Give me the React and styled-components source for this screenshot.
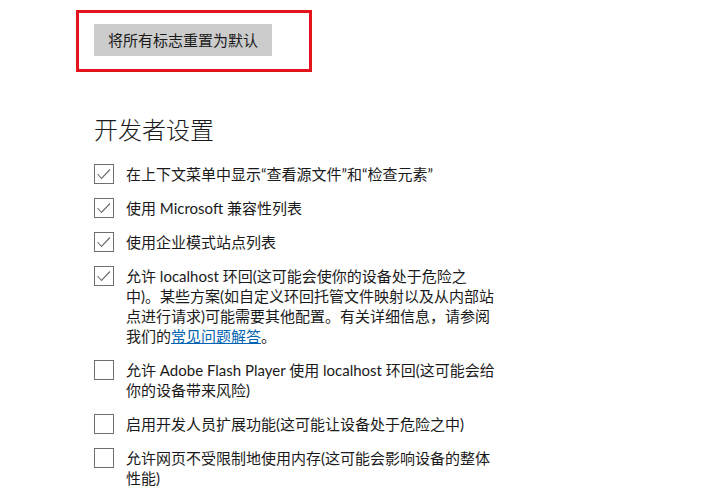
import React from 'react'
import styled, { createGlobalStyle } from 'styled-components'

const GlobalStyle = createGlobalStyle`
  html, body {
    margin: 0;
    padding: 0;
    background: #fff;
  }
  body {
    font-family: "Noto Sans", "Noto Sans CJK SC", sans-serif;
    color: #1f1f1f;
  }
`

const Page = styled.div`
  display: flex;
  flex-direction: column;
  padding: 10px 0 0 76px;
`

const Highlight = styled.div`
  box-sizing: border-box;
  width: 236px;
  height: 62px;
  border: 3px solid #e3141b;
  padding: 11px 0 0 15px;
`

const ResetButton = styled.button`
  box-sizing: border-box;
  height: 32px;
  padding: 0 14px;
  border: none;
  background: #cccccc;
  color: #1a1a1a;
  font-family: "Noto Sans", "Noto Sans CJK SC", sans-serif;
  font-size: 15px;
  line-height: 32px;
  cursor: pointer;
`

const Section = styled.section`
  display: flex;
  flex-direction: column;
  padding-left: 18px;
  margin-top: 42px;
`

const Title = styled.h2`
  margin: 0 0 18px;
  font-size: 24px;
  line-height: 32px;
  font-weight: 300;
  color: #1a1a1a;
`

const List = styled.div`
  display: flex;
  flex-direction: column;
  gap: 14px;
`

const Row = styled.label`
  display: flex;
  align-items: flex-start;
  gap: 12px;
  cursor: pointer;
`

const Box = styled.span`
  box-sizing: border-box;
  flex: 0 0 20px;
  width: 20px;
  height: 20px;
  border: 1px solid #6f6f6f;
  display: flex;
  align-items: center;
  justify-content: center;
  background: #fff;
`

const Label = styled.span`
  width: 374px;
  font-family: Lato, "Noto Sans CJK SC", sans-serif;
  font-size: 15px;
  line-height: 20px;
  color: #1a1a1a;
`

const Link = styled.a`
  color: #0063b1;
  text-decoration: underline;
`

const Check = () => (
  <svg width="18" height="18" viewBox="0 0 18 18">
    <polyline points="2.5,9 6.5,13.5 15,4.5" fill="none" stroke="#6a6a6a" strokeWidth="1.1" />
  </svg>
)

const Option = ({ checked, children }) => (
  <Row>
    <Box>{checked && <Check />}</Box>
    <Label>{children}</Label>
  </Row>
)

export default function App() {
  return (
    <>
      <GlobalStyle />
      <Page>
        <Highlight>
          <ResetButton>将所有标志重置为默认</ResetButton>
        </Highlight>
        <Section>
          <Title>开发者设置</Title>
          <List>
            <Option checked>在上下文菜单中显示“查看源文件”和“检查元素”</Option>
            <Option checked>使用 Microsoft 兼容性列表</Option>
            <Option checked>使用企业模式站点列表</Option>
            <Option checked>
              允许 localhost 环回(这可能会使你的设备处于危险之中)。某些方案(如自定义环回托管文件映射以及从内部站点进行请求)可能需要其他配置。有关详细信息，请参阅我们的<Link href="#faq">常见问题解答</Link>。
            </Option>
            <Option>允许 Adobe Flash Player 使用 localhost 环回(这可能会给你的设备带来风险)</Option>
            <Option>启用开发人员扩展功能(这可能让设备处于危险之中)</Option>
            <Option>允许网页不受限制地使用内存(这可能会影响设备的整体性能)</Option>
          </List>
        </Section>
      </Page>
    </>
  )
}
